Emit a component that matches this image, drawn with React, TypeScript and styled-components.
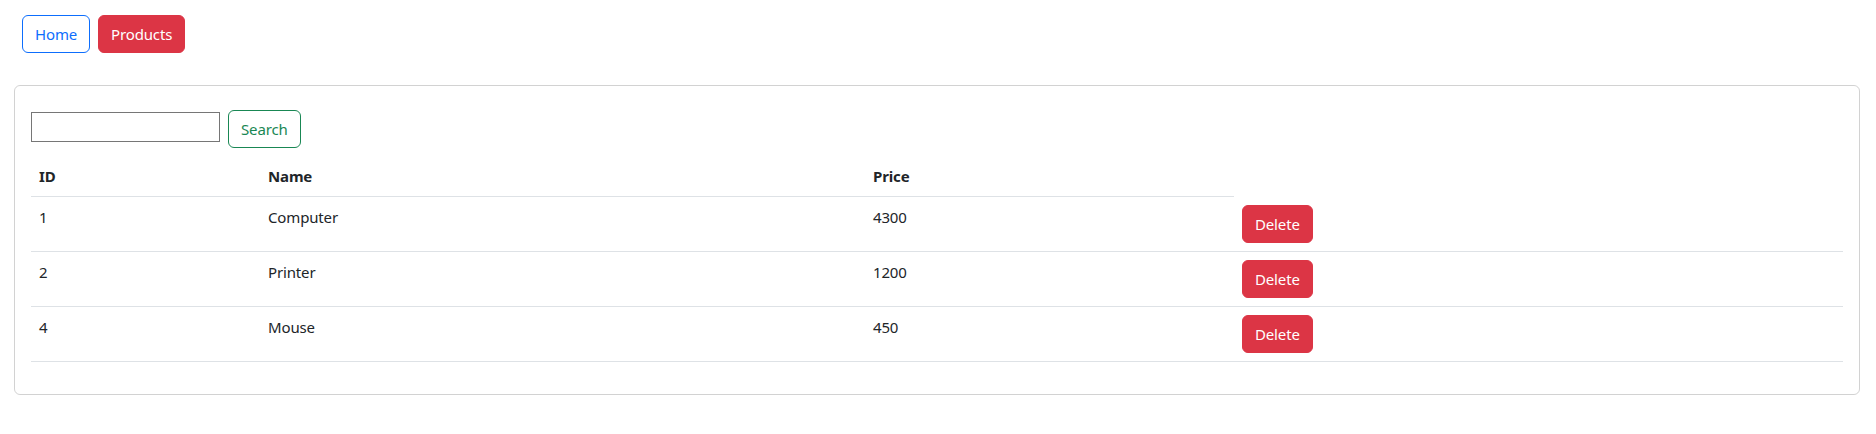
import React from "react";
import styled, { createGlobalStyle } from "styled-components";

const Global = createGlobalStyle`
  html, body { margin: 0; padding: 0; background: #fff; }
  body {
    font-family: "Segoe UI", "Noto Sans", "Liberation Sans", sans-serif;
    font-size: 15px;
    letter-spacing: -0.15px;
    line-height: 24px;
    color: #212529;
  }
  * { box-sizing: border-box; }
`;

const Page = styled.div`
  padding: 15px 16px 0 14px;
`;

const Nav = styled.nav`
  display: flex;
  gap: 8px;
  padding-left: 8px;
  margin-bottom: 32px;
`;

const Button = styled.button<{ $variant: "primary-outline" | "danger" | "success-outline" }>`
  font-family: inherit;
  font-size: 15px;
  letter-spacing: -0.15px;
  line-height: 24px;
  padding: 6px 12px;
  border-radius: 6px;
  border: 1px solid;
  cursor: pointer;
  white-space: nowrap;
  ${({ $variant }) =>
    $variant === "danger"
      ? `background:#dc3545;border-color:#dc3545;color:#fff;`
      : $variant === "primary-outline"
      ? `background:#fff;border-color:#0d6efd;color:#0d6efd;`
      : `background:#fff;border-color:#198754;color:#198754;`}
`;

const Card = styled.section`
  border: 1px solid rgba(0, 0, 0, 0.175);
  border-radius: 6px;
  padding: 16px;
`;

const SearchRow = styled.form`
  display: flex;
  align-items: flex-start;
  gap: 8px;
  margin: 8px 0;
`;

const SearchInput = styled.input`
  width: 189px;
  height: 30px;
  margin-top: 2px;
  border: 1px solid #767676;
  border-radius: 0;
  padding: 1px 2px;
  font-size: 13px;
`;

const Table = styled.table`
  width: 100%;
  border-collapse: collapse;
  margin-bottom: 16px;
  table-layout: fixed;
`;

const Th = styled.th`
  text-align: left;
  font-weight: 700;
  padding: 8px;
  border-bottom: 1px solid #dee2e6;
  vertical-align: top;
`;

const Td = styled.td`
  padding: 8px;
  border-bottom: 1px solid #dee2e6;
  vertical-align: top;
`;

const HeaderRow = styled.tr``;

const products = [
  { id: 1, name: "Computer", price: 4300 },
  { id: 2, name: "Printer", price: 1200 },
  { id: 4, name: "Mouse", price: 450 },
];

export default function App() {
  return (
    <>
      <Global />
      <Page>
        <Nav>
          <Button $variant="primary-outline">Home</Button>
          <Button $variant="danger">Products</Button>
        </Nav>
        <Card>
          <SearchRow onSubmit={(e) => e.preventDefault()}>
            <SearchInput type="text" />
            <Button $variant="success-outline" type="submit">Search</Button>
          </SearchRow>
          <Table>
            <colgroup>
              <col style={{ width: 229 }} />
              <col style={{ width: 605 }} />
              <col style={{ width: 369 }} />
              <col />
            </colgroup>
            <thead>
              <HeaderRow>
                <Th>ID</Th>
                <Th>Name</Th>
                <Th>Price</Th>
              </HeaderRow>
            </thead>
            <tbody>
              {products.map((p) => (
                <tr key={p.id}>
                  <Td>{p.id}</Td>
                  <Td>{p.name}</Td>
                  <Td>{p.price}</Td>
                  <Td>
                    <Button $variant="danger">Delete</Button>
                  </Td>
                </tr>
              ))}
            </tbody>
          </Table>
        </Card>
      </Page>
    </>
  );
}
